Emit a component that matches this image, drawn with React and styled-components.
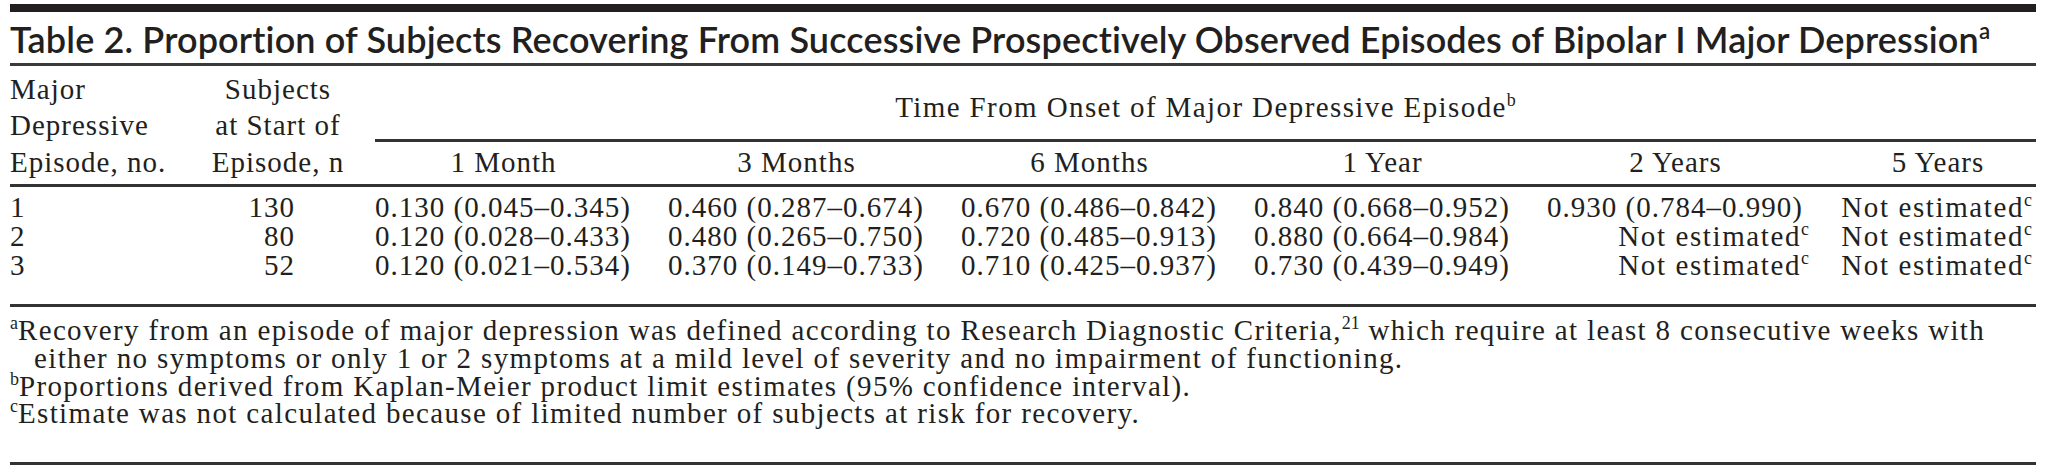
import React from "react";
import styled, { createGlobalStyle } from "styled-components";

const ink = "#231f20";

const GlobalStyle = createGlobalStyle`
  html, body {
    margin: 0;
    padding: 0;
    background: #ffffff;
    color: ${ink};
  }
`;

const Page = styled.div`
  width: 2048px;
  box-sizing: border-box;
  padding: 4px 12px 0 10px;
  font-family: "Liberation Serif", "Times New Roman", serif;
  font-size: 29px;
  letter-spacing: 1px;
`;

const TopRule = styled.div`
  height: 8px;
  background: ${ink};
`;

const Title = styled.h2`
  margin: 6px 0 0;
  padding: 0 0 2.4px;
  border-bottom: 3px solid #3a3a3a;
  font-family: Lato, "Open Sans", sans-serif;
  font-weight: 600;
  font-size: 36px;
  line-height: 43px;
  letter-spacing: 0.15px;
  font-variant-ligatures: none;
  white-space: nowrap;
`;

const Sup = styled.sup`
  font-size: 0.62em;
  line-height: 0;
  vertical-align: 0.62em;
  letter-spacing: 0;
`;

const columns = "195px 170px repeat(5, 293px) 1fr";

const Head = styled.div`
  display: grid;
  grid-template-columns: ${columns};
  grid-template-rows: 73.4px 36.7px;
  padding: 4.2px 0 3.4px;
  border-bottom: 3px solid #333;
  line-height: 36.7px;
`;

const StubHead = styled.div`
  grid-row: 1 / 3;
  white-space: nowrap;
  text-align: ${(p) => (p.$center ? "center" : "left")};
  padding-right: ${(p) => (p.$center ? "24px" : "0")};
`;

const Spanner = styled.div`
  grid-row: 1;
  grid-column: 3 / -1;
  align-self: end;
  margin-bottom: 1.6px;
  padding-bottom: 13.4px;
  border-bottom: 3px solid #333;
  text-align: center;
  white-space: nowrap;
  letter-spacing: 1.4px;
`;

const SubHead = styled.div`
  grid-row: 2;
  text-align: center;
  padding-right: ${(p) => (p.$last ? "0" : "36px")};
  white-space: nowrap;
`;

const Body = styled.div`
  display: grid;
  grid-template-columns: ${columns};
  padding: 5.6px 0 23.4px;
  border-bottom: 3px solid #333;
  line-height: 29.2px;
`;

const Cell = styled.div`
  white-space: nowrap;
  text-align: ${(p) => p.$align || "left"};
  padding-right: ${(p) => p.$pad || 0}px;
`;

const Missing = styled(Cell)`
  letter-spacing: 1.6px;
`;

const Notes = styled.div`
  padding: 10.8px 0 34.5px;
  border-bottom: 3px solid #333;
  font-size: 29px;
  line-height: 27.6px;
  letter-spacing: 1.35px;
`;

const Note = styled.p`
  margin: 0;
  padding-left: 24px;
  text-indent: -24px;
  white-space: nowrap;
`;

const times = ["1 Month", "3 Months", "6 Months", "1 Year", "2 Years", "5 Years"];

const rows = [
  {
    ep: "1",
    n: "130",
    vals: [
      "0.130 (0.045–0.345)",
      "0.460 (0.287–0.674)",
      "0.670 (0.486–0.842)",
      "0.840 (0.668–0.952)",
      "0.930 (0.784–0.990)",
      null,
    ],
  },
  {
    ep: "2",
    n: "80",
    vals: [
      "0.120 (0.028–0.433)",
      "0.480 (0.265–0.750)",
      "0.720 (0.485–0.913)",
      "0.880 (0.664–0.984)",
      null,
      null,
    ],
  },
  {
    ep: "3",
    n: "52",
    vals: [
      "0.120 (0.021–0.534)",
      "0.370 (0.149–0.733)",
      "0.710 (0.425–0.937)",
      "0.730 (0.439–0.949)",
      null,
      null,
    ],
  },
];

const Value = ({ v, last }) =>
  v ? (
    <Cell>{v}</Cell>
  ) : (
    <Missing $align="right" $pad={last ? 4 : 31}>
      Not estimated<Sup>c</Sup>
    </Missing>
  );

export default function App() {
  return (
    <Page>
      <GlobalStyle />
      <TopRule />
      <Title>
        Table 2. Proportion of Subjects Recovering From Successive Prospectively
        Observed Episodes of Bipolar I Major Depression
        <Sup>a</Sup>
      </Title>

      <Head>
        <StubHead>
          Major
          <br />
          Depressive
          <br />
          Episode, no.
        </StubHead>
        <StubHead $center>
          Subjects
          <br />
          at Start of
          <br />
          Episode, n
        </StubHead>
        <Spanner>
          Time From Onset of Major Depressive Episode<Sup>b</Sup>
        </Spanner>
        {times.map((t, i) => (
          <SubHead key={t} $last={i === times.length - 1}>
            {t}
          </SubHead>
        ))}
      </Head>

      <Body>
        {rows.map((r) => (
          <React.Fragment key={r.ep}>
            <Cell>{r.ep}</Cell>
            <Cell $align="right" $pad={80}>
              {r.n}
            </Cell>
            {r.vals.map((v, i) => (
              <Value key={i} v={v} last={i === r.vals.length - 1} />
            ))}
          </React.Fragment>
        ))}
      </Body>

      <Notes>
        <Note>
          <Sup>a</Sup>Recovery from an episode of major depression was defined
          according to Research Diagnostic Criteria,<Sup>21</Sup> which require
          at least 8 consecutive weeks with
          <br />
          either no symptoms or only 1 or 2 symptoms at a mild level of severity
          and no impairment of functioning.
        </Note>
        <Note>
          <Sup>b</Sup>Proportions derived from Kaplan-Meier product limit
          estimates (95% confidence interval).
        </Note>
        <Note>
          <Sup>c</Sup>Estimate was not calculated because of limited number of
          subjects at risk for recovery.
        </Note>
      </Notes>
    </Page>
  );
}
